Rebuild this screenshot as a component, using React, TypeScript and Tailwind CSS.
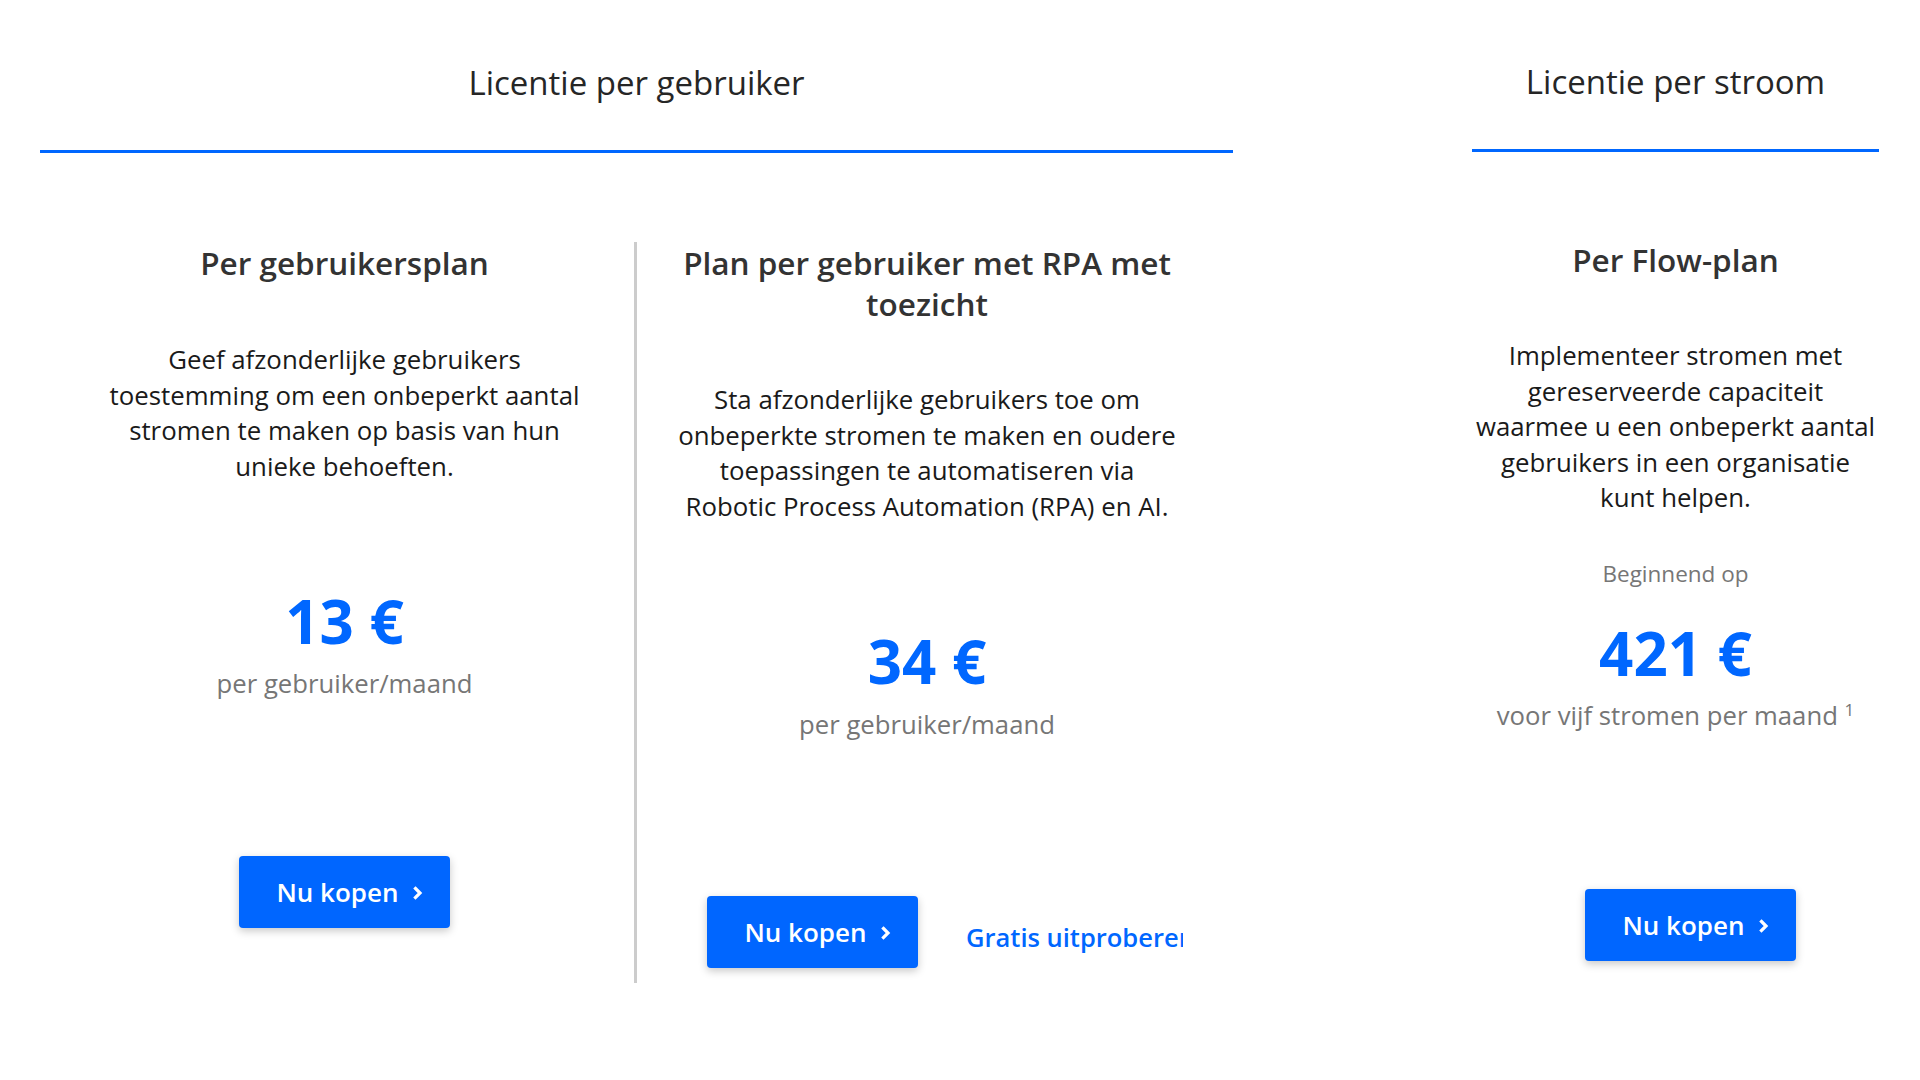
import React from "react";

function Chevron() {
  return (
    <svg width="10" height="14" viewBox="0 0 10 14" className="ml-[14px] mt-[2px]">
      <path d="M2.5 2.5 L7 7 L2.5 11.5" fill="none" stroke="white" strokeWidth="3.2" strokeLinecap="square" />
    </svg>
  );
}

function BuyButton() {
  return (
    <button className="flex h-[72px] w-[211px] items-center justify-center rounded-[4px] bg-[#0066ff] pl-[10px] text-[26px] font-semibold text-white shadow-[0_3px_8px_rgba(0,0,0,0.22)]">
      <span className="leading-none">Nu kopen</span>
      <Chevron />
    </button>
  );
}

export default function App() {
  return (
    <div className="flex h-[1080px] w-[1920px] bg-white font-['Open_Sans',sans-serif] text-[#1a1a1a]">
      {/* Left card */}
      <div className="flex w-[1273px] flex-col rounded-[8px] bg-white">
        <div className="mx-[40px] border-b-[3px] border-[#0067ff] pb-[47px] pt-[63px] text-center text-[33px] leading-[40px] text-[#262626]">
          Licentie per gebruiker
        </div>
        <div className="mx-[55px] mt-[89px] flex h-[741px]">
          {/* Column 1 */}
          <div className="flex w-[579px] flex-col items-center whitespace-nowrap text-center">
            <h2 className="text-[31.5px] font-semibold leading-[41px] text-[#333]">Per gebruikersplan</h2>
            <p className="mt-[59px] text-[25.8px] leading-[35.5px]">
              Geef afzonderlijke gebruikers
              <br />
              toestemming om een onbeperkt aantal
              <br />
              stromen te maken op basis van hun
              <br />
              unieke behoeften.
            </p>
            <div className="mt-[101px] text-[60px] font-bold leading-[72px] text-[#0067ff]">13 €</div>
            <div className="mt-[9px] text-[25.7px] leading-[36px] text-[#767676]">per gebruiker/maand</div>
            <div className="mt-[154px]">
              <BuyButton />
            </div>
          </div>
          {/* Divider */}
          <div className="w-[3px] bg-[#cccccc]" />
          {/* Column 2 */}
          <div className="flex w-[580px] flex-col items-center whitespace-nowrap text-center">
            <h2 className="text-[31.5px] font-semibold leading-[41px] text-[#333]">
              Plan per gebruiker met RPA met
              <br />
              toezicht
            </h2>
            <p className="mt-[58px] text-[25.8px] leading-[35.5px]">
              Sta afzonderlijke gebruikers toe om
              <br />
              onbeperkte stromen te maken en oudere
              <br />
              toepassingen te automatiseren via
              <br />
              Robotic Process Automation (RPA) en AI.
            </p>
            <div className="mt-[101px] text-[60px] font-bold leading-[72px] text-[#0067ff]">34 €</div>
            <div className="mt-[10px] text-[25.7px] leading-[36px] text-[#767676]">per gebruiker/maand</div>
            <div className="mt-[153px] flex w-full items-center">
              <div className="ml-[70px]">
                <BuyButton />
              </div>
              <div className="ml-[48px] mt-[10px] w-[217px] overflow-hidden whitespace-nowrap text-left text-[25.5px] font-semibold leading-[40px] text-[#0067ff]">
                Gratis uitproberen
              </div>
            </div>
          </div>
        </div>
      </div>

      <div className="w-[159px]" />

      {/* Right card */}
      <div className="flex w-[488px] flex-col rounded-[8px] bg-white">
        <div className="ml-[40px] mr-[41px] border-b-[3px] border-[#0067ff] pb-[47px] pt-[62px] text-center text-[33px] leading-[40px] text-[#262626]">
          Licentie per stroom
        </div>
        <div className="ml-[40px] mr-[41px] mt-[87px] flex flex-col items-center whitespace-nowrap text-center">
          <h2 className="text-[31.5px] font-semibold leading-[41px] text-[#333]">Per Flow-plan</h2>
          <p className="mt-[58px] text-[25.8px] leading-[35.5px]">
            Implementeer stromen met
            <br />
            gereserveerde capaciteit
            <br />
            waarmee u een onbeperkt aantal
            <br />
            gebruikers in een organisatie
            <br />
            kunt helpen.
          </p>
          <div className="mt-[43px] text-[22.5px] leading-[30px] text-[#767676]">Beginnend op</div>
          <div className="mt-[28px] text-[60px] font-bold leading-[72px] text-[#0067ff]">421 €</div>
          <div className="mt-[9px] text-[25.7px] leading-[36px] text-[#767676]">
            voor vijf stromen per maand <sup className="text-[17px]">1</sup>
          </div>
          <div className="ml-[30px] mt-[155px]">
            <BuyButton />
          </div>
        </div>
      </div>
    </div>
  );
}
